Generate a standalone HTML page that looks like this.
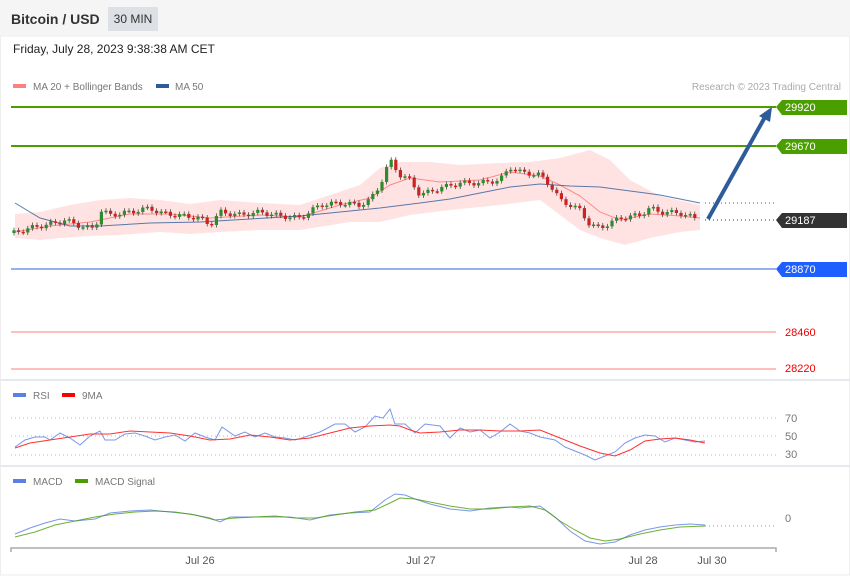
<!DOCTYPE html>
<html><head><meta charset="utf-8"><style>
body{margin:0;background:#fff;font-family:"Liberation Sans",sans-serif;}
#w{position:relative;width:850px;height:576px;overflow:hidden;background:#fff;}
.hdr{position:absolute;left:0;top:0;width:850px;height:36px;background:#f5f5f5;}
.t{position:absolute;left:11px;top:11px;font-size:14px;font-weight:bold;color:#333;}
.tf{position:absolute;left:108px;top:7px;width:50px;height:24px;background:#dde0e4;color:#333;font-size:12px;line-height:24px;text-align:center;}
.d{position:absolute;left:13px;top:42px;font-size:12px;color:#222;}
svg{position:absolute;left:0;top:0;}
text{font-family:"Liberation Sans",sans-serif;}
</style></head><body><div id="w">
<div class="hdr"></div><div class="t">Bitcoin / USD</div><div class="tf">30 MIN</div>
<div class="d">Friday, July 28, 2023 9:38:38 AM CET</div>
<svg width="850" height="576" id="s">
<rect x="0.5" y="36" width="849" height="539" fill="none" stroke="#eee"/>
<line x1="0" y1="380" x2="850" y2="380" stroke="#e6e9ee" stroke-width="2"/>
<line x1="0" y1="466" x2="850" y2="466" stroke="#e6e9ee" stroke-width="2"/>
<rect x="13" y="84" width="13" height="4" fill="#ff8080"/>
<text x="33" y="90" font-size="10" fill="#777">MA 20 + Bollinger Bands</text>
<rect x="156" y="84" width="13" height="4" fill="#2e5c9a"/>
<text x="175" y="90" font-size="10" fill="#777">MA 50</text>
<text x="841" y="90" font-size="10" fill="#aaa" text-anchor="end">Research © 2023 Trading Central</text>
<polygon fill="#ffe3e3" points="15,214 40,212 70,205 100,200 130,198 160,200 190,204 220,200 260,203 300,205 330,195 360,185 380,168 400,162 430,162 460,165 500,163 530,162 560,158 590,150 610,160 630,180 660,196 700,205 700,230 680,232 650,238 625,245 600,238 580,230 560,215 540,200 500,205 450,210 410,215 380,222 350,222 300,230 260,230 220,232 190,234 160,232 120,235 90,236 60,238 40,240 15,238"/>
<polyline fill="none" stroke="#ff8888" stroke-width="1" points="15,232 50,226 90,222 130,214 170,214 210,218 260,215 300,217 340,205 370,198 390,185 410,178 440,182 480,180 510,172 540,176 560,185 580,196 600,212 620,220 650,214 680,216 700,218"/>
<polyline fill="none" stroke="#2e5c9a" stroke-width="1" opacity="0.8" points="15,203 40,218 70,226 100,226 150,223 200,222 250,219 300,216 340,212 380,208 420,203 450,199 480,193 510,187 540,184 570,186 600,187 630,191 660,195 700,203"/>
<g id="c"></g>
<line x1="11" y1="107" x2="776" y2="107" stroke="#4a9e00" stroke-width="2"/>
<line x1="11" y1="146" x2="776" y2="146" stroke="#4a9e00" stroke-width="2"/>
<line x1="11" y1="269" x2="776" y2="269" stroke="#2a62e0" stroke-width="1"/>
<line x1="11" y1="332" x2="776" y2="332" stroke="#ffaaaa" stroke-width="1.5"/>
<line x1="11" y1="369" x2="776" y2="369" stroke="#ffaaaa" stroke-width="1.5"/>
<line x1="705" y1="203" x2="776" y2="203" stroke="#2e5c9a" stroke-dasharray="1,3"/>
<line x1="705" y1="220" x2="776" y2="220" stroke="#333" stroke-dasharray="1,3"/>
<line x1="708" y1="219" x2="765" y2="117" stroke="#2e5c9a" stroke-width="4"/>
<polygon points="772,107 759,116 770,122" fill="#2e5c9a"/>
<g font-size="11" fill="#fff">
<polygon points="776,107 782,100 847,100 847,115 782,115" fill="#4a9e00"/><text x="785" y="111">29920</text>
<polygon points="776,146 782,139 847,139 847,154 782,154" fill="#4a9e00"/><text x="785" y="150">29670</text>
<polygon points="776,220 782,213 847,213 847,228 782,228" fill="#333"/><text x="785" y="224">29187</text>
<polygon points="776,269 782,262 847,262 847,277 782,277" fill="#1f5fff"/><text x="785" y="273">28870</text>
</g>
<text x="785" y="336" font-size="11" fill="#e00">28460</text>
<text x="785" y="372" font-size="11" fill="#e00">28220</text>
<rect x="13" y="393" width="13" height="4" fill="#5b7fe6"/><text x="33" y="399" font-size="10" fill="#777">RSI</text>
<rect x="62" y="393" width="13" height="4" fill="#f00"/><text x="82" y="399" font-size="10" fill="#777">9MA</text>
<g stroke="#bbb" stroke-dasharray="1,3"><line x1="11" y1="418" x2="776" y2="418"/><line x1="11" y1="436" x2="776" y2="436"/><line x1="11" y1="455" x2="776" y2="455"/></g>
<g font-size="11" fill="#777"><text x="785" y="422">70</text><text x="785" y="440">50</text><text x="785" y="458">30</text><text x="785" y="522">0</text></g>
<polyline fill="none" stroke="#7b96e8" stroke-width="1" points="15,447 25,440 35,437 45,437 50,440 60,433 70,438 80,445 90,436 100,431 105,440 115,440 125,434 135,433 145,436 155,440 165,437 175,435 185,441 195,433 205,437 215,440 222,427 235,436 245,432 255,437 265,433 275,437 285,438 295,440 305,437 320,432 335,424 345,424 355,432 365,427 375,416 383,418 390,409 395,424 405,424 415,433 425,424 440,426 450,438 460,428 470,432 480,430 490,438 500,432 510,424 520,431 530,433 540,437 555,440 565,447 575,451 585,455 595,460 605,456 615,452 625,443 635,438 645,435 655,436 665,442 675,438 685,440 695,442 705,441"/>
<polyline fill="none" stroke="#ff3030" stroke-width="1" points="15,448 30,443 50,440 70,437 90,434 110,434 130,431 150,432 170,433 190,436 210,440 230,439 250,435 270,437 290,440 310,438 330,433 350,428 370,426 390,425 400,426 410,430 420,433 440,432 460,430 480,430 500,431 520,431 540,430 560,438 580,446 600,453 615,456 630,450 645,441 660,439 675,438 690,440 705,443"/>
<rect x="13" y="479" width="13" height="4" fill="#5b7fe6"/><text x="33" y="485" font-size="10" fill="#777">MACD</text>
<rect x="75" y="479" width="13" height="4" fill="#4a9e00"/><text x="95" y="485" font-size="10" fill="#777">MACD Signal</text>
<line x1="705" y1="526" x2="776" y2="526" stroke="#7b96e8" stroke-dasharray="1,3"/>
<polyline fill="none" stroke="#7b96e8" stroke-width="1" points="15,534 30,528 45,523 60,519 75,521 95,519 110,513 130,511 150,510 170,512 190,514 210,518 220,522 230,517 250,517 270,517 290,517 310,520 330,515 350,513 370,512 385,500 395,494 405,495 415,499 430,504 450,509 470,511 490,508 510,507 520,508 540,506 555,517 570,531 585,541 600,544 615,542 630,535 645,530 660,527 675,525 690,524 705,525"/>
<polyline fill="none" stroke="#4a9e00" stroke-width="1" opacity="0.8" points="15,537 35,532 55,525 75,521 95,517 115,514 135,512 155,511 175,512 195,515 215,520 235,518 255,517 275,516 295,518 315,518 335,515 355,512 375,510 390,503 400,498 415,499 430,502 450,506 470,509 490,509 510,507 530,506 545,510 560,521 575,530 590,538 605,541 620,539 640,534 660,530 680,527 705,526"/>
<polyline fill="none" stroke="#aaa" stroke-width="1.5" points="11,552 11,548 776,548 776,552"/>
<g font-size="11" fill="#555" text-anchor="middle"><text x="200" y="564">Jul 26</text><text x="421" y="564">Jul 27</text><text x="643" y="564">Jul 28</text><text x="712" y="564">Jul 30</text></g>
</svg>
<script>
(function(){
var p=[[13,233],[30,228],[55,223],[65,220],[80,226],[95,229],[100,210],[110,215],[130,212],[150,208],[160,213],[200,218],[210,225],[220,212],[240,215],[260,212],[280,216],[300,218],[320,205],[340,203],[360,205],[370,200],[380,185],[390,160],[400,175],[410,180],[420,195],[440,188],[460,183],[480,183],[500,180],[510,167],[520,172],[540,175],[550,185],[560,200],[570,205],[580,210],[590,225],[600,228],[620,218],[640,215],[650,208],[660,212],[680,213],[700,220]];
function f(x){for(var i=0;i<p.length-1;i++){if(x<=p[i+1][0]){var t=(x-p[i][0])/(p[i+1][0]-p[i][0]);return p[i][1]+t*(p[i+1][1]-p[i][1]);}}return 220;}
var g=document.getElementById('c'),h='',prev=f(13);
for(var x=14;x<=698;x+=4.6){var c=f(x)+Math.sin(x*1.7)*2.5,o=prev,a=Math.min(o,c),b=Math.max(o,c),col=c<o?'#2e8b2e':'#cc2222';
h+='<line x1="'+x+'" x2="'+x+'" y1="'+(a-2.5)+'" y2="'+(b+2.5)+'" stroke="#333" stroke-width="0.7"/><rect x="'+(x-1.6)+'" y="'+a+'" width="3.2" height="'+Math.max(1.5,b-a)+'" fill="'+col+'"/>';prev=c;}
g.innerHTML=h;
})();
</script>
</div></body></html>
